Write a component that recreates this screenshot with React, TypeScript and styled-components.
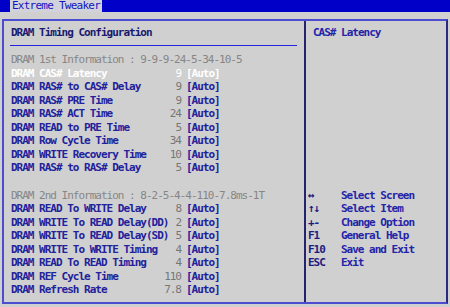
import React from 'react';
import styled, { createGlobalStyle } from 'styled-components';

const LINE = 13.55;

const GlobalStyle = createGlobalStyle`
  html, body {
    margin: 0;
    padding: 0;
    background: #d0d0d0;
  }
  body {
    width: 450px;
    height: 307px;
    overflow: hidden;
    font-family: 'DejaVu Sans Mono', 'Liberation Mono', monospace;
    font-size: 11px;
    letter-spacing: -1px;
  }
`;

interface Item {
  label: string;
  value: string;
  selected?: boolean;
}

const firstGroup: Item[] = [
  { label: 'DRAM CAS# Latency', value: '9', selected: true },
  { label: 'DRAM RAS# to CAS# Delay', value: '9' },
  { label: 'DRAM RAS# PRE Time', value: '9' },
  { label: 'DRAM RAS# ACT Time', value: '24' },
  { label: 'DRAM READ to PRE Time', value: '5' },
  { label: 'DRAM Row Cycle Time', value: '34' },
  { label: 'DRAM WRITE Recovery Time', value: '10' },
  { label: 'DRAM RAS# to RAS# Delay', value: '5' },
];

const secondGroup: Item[] = [
  { label: 'DRAM READ To WRITE Delay', value: '8' },
  { label: 'DRAM WRITE To READ Delay(DD)', value: '2' },
  { label: 'DRAM WRITE To READ Delay(SD)', value: '5' },
  { label: 'DRAM WRITE To WRITE Timing', value: '4' },
  { label: 'DRAM READ To READ Timing', value: '4' },
  { label: 'DRAM REF Cycle Time', value: '110' },
  { label: 'DRAM Refresh Rate', value: '7.8' },
];

const helpKeys = [
  { key: '\u2194', text: 'Select Screen' },
  { key: '\u2191\u2193', text: 'Select Item' },
  { key: '+-', text: 'Change Option' },
  { key: 'F1', text: 'General Help' },
  { key: 'F10', text: 'Save and Exit' },
  { key: 'ESC', text: 'Exit' },
];

const SettingRow: React.FC<{ item: Item }> = ({ item }) => (
  <Row $selected={item.selected}>
    <Field>
      <Label>{item.label}</Label>
      <Value $selected={item.selected}>{item.value}</Value>
    </Field>
    <Setting>[Auto]</Setting>
  </Row>
);

const App: React.FC = () => {
  return (
    <>
      <GlobalStyle />
      <TopBar>
        <Tab>Extreme Tweaker</Tab>
      </TopBar>
      <Frame>
        <MainPanel>
          <Heading>DRAM Timing Configuration</Heading>
          <Rule />
          <Info>DRAM 1st Information : 9-9-9-24-5-34-10-5</Info>
          {firstGroup.map((i) => (
            <SettingRow key={i.label} item={i} />
          ))}
          <Blank />
          <Info>DRAM 2nd Information : 8-2-5-4-4-110-7.8ms-1T</Info>
          {secondGroup.map((i) => (
            <SettingRow key={i.label} item={i} />
          ))}
        </MainPanel>
        <HelpPanel>
          <HelpTitle>CAS# Latency</HelpTitle>
          <KeyList>
            {helpKeys.map((k) => (
              <KeyRow key={k.text}>
                <KeyName>{k.key}</KeyName>
                <KeyText>{k.text}</KeyText>
              </KeyRow>
            ))}
          </KeyList>
        </HelpPanel>
      </Frame>
    </>
  );
};

export default App;

const TopBar = styled.div`
  height: 12px;
  background: #0000c8;
  padding-left: 10px;
  display: flex;
`;

const Tab = styled.div`
  height: 12px;
  padding: 0 2px 0 2px;
  background: #d2d2dc;
  color: #1414c0;
  line-height: 12px;
  white-space: nowrap;
  letter-spacing: -0.75px;
`;

const Frame = styled.div`
  margin: 7px 2px 0 2px;
  height: 285px;
  box-sizing: border-box;
  border: 2px solid #4c4cd0;
  border-right-color: #2a2a80;
  display: flex;
`;

const MainPanel = styled.div`
  width: 302px;
  padding: 5px 0 0 7px;
  box-sizing: border-box;
  border-right: 2px solid #24246e;
`;

const Heading = styled.div`
  height: ${LINE}px;
  line-height: ${LINE}px;
  color: #1a1a70;
  font-weight: bold;
  white-space: nowrap;
`;

const Rule = styled.div`
  height: ${LINE}px;
  margin: 0 7px 0 -1px;
  display: flex;
  align-items: center;

  &::after {
    content: '';
    display: block;
    width: 100%;
    height: 1px;
    margin-top: -1px;
    background: #2222e0;
  }
`;

const Info = styled.div`
  height: ${LINE}px;
  line-height: ${LINE}px;
  color: #868686;
  white-space: nowrap;
`;

const Blank = styled.div`
  height: ${LINE}px;
`;

const Row = styled.div<{ $selected?: boolean }>`
  height: ${LINE}px;
  line-height: ${LINE}px;
  display: flex;
  white-space: nowrap;
  font-weight: bold;
  color: ${(p) => (p.$selected ? '#ffffff' : '#22229c')};
`;

const Field = styled.div`
  width: 170px;
  display: flex;
  justify-content: space-between;
`;

const Label = styled.span``;

const Value = styled.span<{ $selected?: boolean }>`
  font-weight: normal;
  color: ${(p) => (p.$selected ? '#ffffff' : '#767676')};
`;

const Setting = styled.span`
  margin-left: 5px;
`;

const HelpPanel = styled.div`
  flex: 1;
  padding: 5px 0 0 2px;
  box-sizing: border-box;
`;

const HelpTitle = styled.div`
  height: ${LINE}px;
  line-height: ${LINE}px;
  padding-left: 5px;
  color: #2424a8;
  font-weight: bold;
  white-space: nowrap;
`;

const KeyList = styled.div`
  margin-top: ${LINE * 11}px;
`;

const KeyRow = styled.div`
  height: ${LINE}px;
  line-height: ${LINE}px;
  display: flex;
  white-space: nowrap;
  font-weight: bold;
  color: #2424a8;
`;

const KeyName = styled.span`
  width: 33px;
  color: #1c1c80;
`;

const KeyText = styled.span``;
